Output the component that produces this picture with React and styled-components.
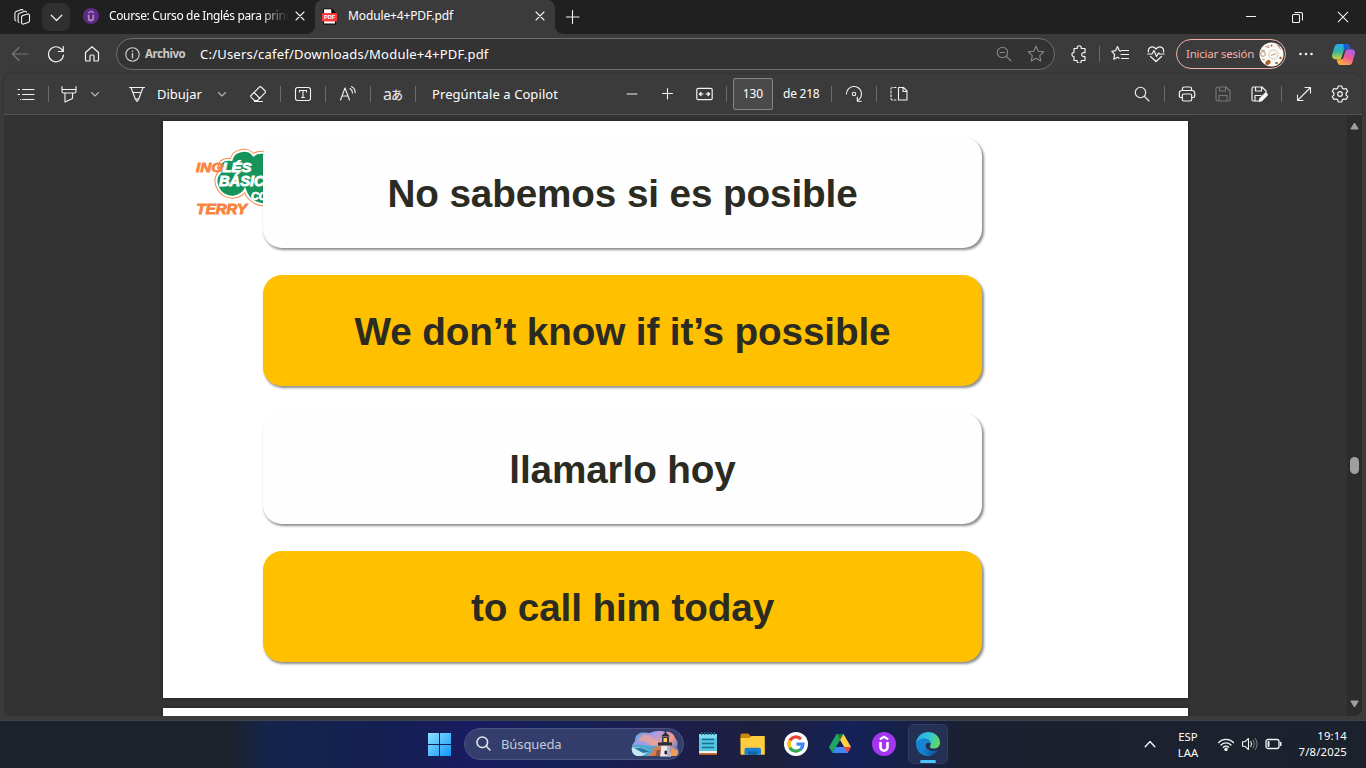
import React from "react";
import styled, { createGlobalStyle, css } from "styled-components";

const GlobalStyle = createGlobalStyle`
  * { box-sizing: border-box; }
  body { margin: 0; background: #3b3b3b; overflow: hidden; }
  svg { display: block; flex: none; }
`;

const ui = css`font-family: "Noto Sans", "Open Sans", "Noto Sans CJK JP", sans-serif;`;

const Screen = styled.div`
  ${ui}
  width: 1366px;
  height: 768px;
  display: flex;
  flex-direction: column;
  color: #fff;
  background: #3b3b3b;
  overflow: hidden;
`;

const Label = styled.span`
  flex: none;
  width: ${(p) => (p.$w ? p.$w + "px" : "auto")};
  margin-left: ${(p) => p.$ml || 0}px;
  font-size: ${(p) => p.$size || 13}px;
  font-weight: ${(p) => p.$weight || 400};
  letter-spacing: ${(p) => p.$ls || 0}px;
  color: ${(p) => p.$color || "#fff"};
  line-height: 18px;
  white-space: nowrap;
`;

const Glyph = styled.svg`
  width: ${(p) => p.$w || 18}px;
  height: ${(p) => p.$h || 18}px;
  margin-left: ${(p) => p.$ml || 0}px;
  color: ${(p) => p.$color || "#f2f2f2"};
  fill: none;
  stroke: currentColor;
  stroke-width: ${(p) => p.$sw || 1.1};
  stroke-linecap: round;
  stroke-linejoin: round;
`;

const Divider = styled.i`
  flex: none;
  width: 1px;
  height: 16px;
  margin-left: ${(p) => p.$ml || 0}px;
  background: #6b6b6b;
`;

/* ---------- tab strip ---------- */

const TabStrip = styled.header`
  height: 34px;
  flex: none;
  display: flex;
  align-items: center;
  background: #202020;
`;

const TabMenuButton = styled.div`
  width: 28px;
  height: 28px;
  margin-left: 11px;
  border-radius: 8px;
  background: #303030;
  display: grid;
  place-items: center;
`;

const InactiveTab = styled.div`
  width: 245px;
  height: 34px;
  padding: 0 0 2px 13px;
  display: flex;
  align-items: center;
`;

const FadedTitle = styled(Label)`
  overflow: hidden;
  mask-image: linear-gradient(90deg, #000 84%, transparent 100%);
`;

const ActiveTab = styled.div`
  position: relative;
  width: 240px;
  height: 34px;
  padding: 0 0 2px 7px;
  display: flex;
  align-items: center;
  background: #3b3b3b;
  border-radius: 8px 8px 0 0;
  &::before, &::after {
    content: "";
    position: absolute;
    bottom: 0;
    width: 8px;
    height: 8px;
  }
  &::before { left: -8px; background: radial-gradient(circle at 0 0, #202020 7.5px, #3b3b3b 8px); }
  &::after { right: -8px; background: radial-gradient(circle at 100% 0, #202020 7.5px, #3b3b3b 8px); }
`;

const WindowButtons = styled.div`
  margin-left: auto;
  display: flex;
  align-items: center;
`;

const WindowButton = styled.div`
  width: 46px;
  display: grid;
  place-items: center;
`;

/* ---------- address row ---------- */

const AddressRow = styled.div`
  height: 40px;
  flex: none;
  display: flex;
  align-items: center;
`;

const AddressBox = styled.div`
  width: 939px;
  height: 32px;
  margin-left: 15px;
  padding-right: 10px;
  display: flex;
  align-items: center;
  border: 1px solid #6e6e6e;
  border-radius: 16px;
  background: #333;
`;

const SignIn = styled.div`
  width: 110px;
  height: 30px;
  margin-left: 11px;
  padding: 0 1px 0 9px;
  display: flex;
  align-items: center;
  justify-content: space-between;
  border: 1px solid #f3b0a8;
  border-radius: 15px;
`;

/* ---------- pdf toolbar ---------- */

const PdfToolbar = styled.div`
  height: 41px;
  flex: none;
  margin: 0 4px;
  display: flex;
  align-items: center;
  border-radius: 8px 8px 0 0;
  border-bottom: 1px solid #535353;
  box-shadow: 0 0 3px rgba(0, 0, 0, 0.35);
`;

const TranslateMark = styled.span`
  flex: none;
  width: 20px;
  margin-left: 12px;
  display: flex;
  align-items: baseline;
  font-size: 16px;
  line-height: 18px;
  color: #e6e6e6;
`;

const Kana = styled.span`
  margin-left: -1px;
  font: 500 12px/18px "Noto Sans CJK JP", sans-serif;
`;

const PageNumber = styled.div`
  width: 40px;
  height: 32px;
  margin-left: 6px;
  border: 1px solid #858585;
  border-radius: 2px;
  background: #4a4a4a;
  display: grid;
  place-items: center;
`;

/* ---------- document ---------- */

const Viewer = styled.main`
  height: 601px;
  flex: none;
  margin: 0 4px;
  display: flex;
  background: #333;
  border-radius: 0 0 8px 8px;
  overflow: hidden;
`;

const Pages = styled.div`
  width: 1025px;
  margin: 6px 0 0 159px;
  display: flex;
  flex-direction: column;
  gap: 10px;
`;

const Page = styled.section`
  height: 577px;
  flex: none;
  padding: 16px 0 0 32px;
  display: flex;
  align-items: flex-start;
  background: #fff;
  box-shadow: 0 0 4px rgba(0, 0, 0, 0.4);
`;

const LogoSlot = styled.div`
  width: 68px;
  margin-top: 9px;
`;

const Cards = styled.div`
  position: relative;
  width: 719px;
  display: flex;
  flex-direction: column;
  gap: 27px;
`;

const Card = styled.div`
  height: 111px;
  padding-top: 2px;
  display: grid;
  place-items: center;
  border-radius: 19px;
  background: ${(p) => (p.$gold ? "#ffc000" : "#fefefe")};
  box-shadow: 1.5px 2px 2.5px rgba(0, 0, 0, 0.45);
  font: bold 38.7px/44px "Liberation Sans", Arial, sans-serif;
  letter-spacing: -0.12px;
  color: #2b2b22;
  white-space: nowrap;
`;

const Scrollbar = styled.div`
  width: 15px;
  margin-left: auto;
  padding: 7px 0 8px;
  display: flex;
  flex-direction: column;
  align-items: center;
  justify-content: space-between;
  background: #2c2c2c;
`;

const Thumb = styled.div`
  width: 9px;
  height: 17px;
  margin-top: 100px;
  border-radius: 5px;
  background: #9f9f9f;
`;

/* ---------- taskbar ---------- */

const Taskbar = styled.footer`
  height: 48px;
  margin-top: 4px;
  flex: none;
  display: flex;
  align-items: center;
  padding: 0 0 2px 427px;
  border-top: 1px solid #3d4350;
  background: linear-gradient(90deg, #1b222c 0, #1b222c 230px, #14244c 268px, #131f52 390px,
    #191c60 470px, #142256 570px, #1b1d50 640px, #1e1f3c 770px, #14225a 850px,
    #152148 900px, #1b2030 970px, #1b222c 1366px);
`;

const SearchBox = styled.div`
  width: 220px;
  height: 32px;
  margin-left: 13px;
  padding-left: 11px;
  display: flex;
  align-items: center;
  border: 1px solid #4b5483;
  border-radius: 16px;
  background: #333e6c;
`;

const ActiveApp = styled.div`
  width: 40px;
  height: 40px;
  margin-left: 12px;
  padding-top: 7px;
  display: flex;
  flex-direction: column;
  align-items: center;
  justify-content: space-between;
  border: 1px solid #303b63;
  border-radius: 5px;
  background: #243054;
`;

const ActiveMark = styled.i`
  width: 16px;
  height: 3px;
  border-radius: 2px;
  background: #4cc2ff;
`;

const Stack = styled.div`
  width: ${(p) => p.$w}px;
  margin-left: ${(p) => p.$ml || 0}px;
  padding-top: ${(p) => p.$pt || 0}px;
  text-align: ${(p) => p.$align || "center"};
  font-size: 11.3px;
  line-height: 16px;
  letter-spacing: ${(p) => p.$ls || 0}px;
  white-space: nowrap;
`;

const Art = styled.svg`
  width: ${(p) => p.$w}px;
  height: ${(p) => p.$h || p.$w}px;
  margin-left: ${(p) => p.$ml || 0}px;
`;

/* ---------- drawings ---------- */

const Chevron = ({ ml, w = 10, up, color, sw }) => (
  <Glyph $w={w} $h={w} $ml={ml} $color={color} $sw={sw} viewBox="0 0 10 10">
    <path d={up ? "M1 7.2 5 3l4 4.2" : "M1.5 3.5 5 7l3.5-3.5"} />
  </Glyph>
);

const Cross = ({ w = 10, ml, sw = 1.1 }) => (
  <Glyph $w={w} $h={w} $ml={ml} $sw={sw} viewBox="0 0 10 10">
    <path d="M1 1l8 8M9 1 1 9" />
  </Glyph>
);

const UdemyIcon = ({ w, ml, bg, fg }) => (
  <Art $w={w} $ml={ml} viewBox="0 0 24 24">
    <circle cx="12" cy="12" r="12" fill={bg} />
    <path d="M7.8 7.4 12 4.8l4.2 2.6" fill="none" stroke={fg} strokeWidth="2" />
    <path d="M8.5 10v5.2a3.5 3.5 0 0 0 7 0V10" fill="none" stroke={fg} strokeWidth="2.6" />
  </Art>
);

const PdfIcon = () => (
  <Art $w={15} $h={17} viewBox="0 0 15 17">
    <path d="M1.5.8h8L13.500 5v11h-12z" fill="#fff" stroke="#000" />
    <path d="M9.3.5 13.8 5H9.3z" fill="#000" />
    <rect y="5" width="15" height="8.4" rx=".8" fill="#f83b3b" />
    <text x="7.5" y="11.300" textAnchor="middle" fontFamily="Liberation Sans, sans-serif" fontWeight="700" fontSize="5.6" fill="#fff">PDF</text>
  </Art>
);

const WorkspacesIcon = () => (
  <Glyph $ml={13} viewBox="0 0 18 18" $sw={1.1}>
    <path d="M9 7.800 14.800 5.900a1.300 1.300 0 0 1 1.700 1.200v5.400a2 2 0 0 1-1.400 1.900l-4.800 1.700a1.300 1.300 0 0 1-1.700-1.200V9.300A1.600 1.600 0 0 1 9.600 7.700" />
    <path d="M6 14.500a1.400 1.400 0 0 1-.9-1.300V7.200a2 2 0 0 1 1.300-1.900l5.500-2a1.300 1.300 0 0 1 1.600.7M2.800 12.700a1.400 1.400 0 0 1-.9-1.300V5.500a2 2 0 0 1 1.300-1.900l5.300-2a1.300 1.300 0 0 1 1.500.6" />
  </Glyph>
);

const CopilotIcon = () => (
  <Art $w={23} $h={21} $ml={18} viewBox="0 0 23 21">
    <defs>
      <linearGradient id="cpA" x1="0" y1="0" x2="0" y2="1">
        <stop offset="0" stopColor="#29a8f5" /><stop offset=".5" stopColor="#31b6a0" /><stop offset="1" stopColor="#d7d132" />
      </linearGradient>
      <linearGradient id="cpB" x1=".6" y1="0" x2=".3" y2="1">
        <stop offset="0" stopColor="#a85cf5" /><stop offset=".5" stopColor="#ef5b8c" /><stop offset="1" stopColor="#ffae4a" />
      </linearGradient>
    </defs>
    <path d="M6 0h8.500c1.800 0 2.500 1.200 3 2.900L18.300 5H14c-1.500 0-2.200 1-2.600 2.500L9.700 13c-.5 1.500-1.300 2.300-2.700 2.300H3.400C.6 15.300-.5 13 .3 10L2.400 3C3 1 4.200 0 6 0z" fill="url(#cpA)" />
    <path d="M11.500 0h3c1.800 0 2.500 1.200 3 2.900L18.300 5H14c-1 0-1.700.5-2.100 1.300z" fill="#1762d6" />
    <path d="M17 21H8.500c-1.800 0-2.500-1.200-3-2.900L4.700 15.500H9c1.500 0 2.200-1 2.600-2.500L13.300 7.500C13.800 6 14.600 5.200 16 5.200h3.600c2.800 0 3.900 2.300 3.100 5.300l-2.100 7C20 20 18.800 21 17 21z" fill="url(#cpB)" />
    <path d="M4.700 15.500H9c1 0 1.700-.5 2.100-1.300L9 21c-2 0-3-1-3.500-2.900z" fill="#f8a83a" />
  </Art>
);

const Avatar = () => (
  <Art $w={25} viewBox="0 0 25 25">
    <defs><clipPath id="avatarClip"><circle cx="12.500" cy="12.500" r="12" /></clipPath></defs>
    <g clipPath="url(#avatarClip)">
      <rect width="25" height="25" fill="#fdfbf8" />
      <g fill="none" stroke="#a97848" strokeWidth=".8">
        <circle cx="14.500" cy="12.500" r="4.600" stroke="#cbb096" /><circle cx="4" cy="12" r="2.400" />
        <path d="M12 13.500l5-2M6 4l3 1.500M9 3l1 3M2 8l4 1M20 4l1.500 3.500M3 17l3 1" />
      </g>
      <g fill="#a5622c">
        <ellipse cx="9" cy="20.500" rx="2.900" ry="2.200" transform="rotate(-45 9 20.500)" />
        <ellipse cx="17.500" cy="21" rx="1.600" ry="1.100" /><circle cx="21.500" cy="16" r="1.200" />
        <circle cx="12.500" cy="3.500" r="1" /><path d="M18 2.500l2.500 1-1 1.500z" />
      </g>
    </g>
  </Art>
);

const cloud = "M73 7.500C66 6 61 7 58.500 9.500C55.500 5 50 4.500 47 5c-6 .8-9.500 4.500-10.500 9C31 13 26 15 25 19c-.5 3 0 5 .5 7-4 4-5 9-3 14 3 8 10 11.500 17 10.500 5-1 9-4 10.500-7C53 53 60 59 73 58.500z";

const LogoArt = () => (
  <Art $w={69} $h={70} viewBox="0 0 69 70">
    <path d={cloud} fill="#17945c" stroke="#fa8a45" strokeWidth="4" />
    <path d={cloud} fill="#17945c" stroke="#fff" strokeWidth="2" />
    <g fontFamily="Liberation Sans, Arial, sans-serif" fontWeight="700" fontStyle="italic" strokeLinejoin="miter">
      <text x="1" y="25.500" fontSize="13.500" textLength="27" lengthAdjust="spacingAndGlyphs" fill="#fa8540" stroke="#fa8540" strokeWidth=".8">ING</text>
      <text x="27.500" y="25.500" fontSize="13.500" textLength="29" lengthAdjust="spacingAndGlyphs" fill="#fff" stroke="#fff" strokeWidth=".9">LÉS</text>
      <text x="24" y="39.500" fontSize="14" textLength="57" lengthAdjust="spacingAndGlyphs" fill="#fff" stroke="#fff" strokeWidth=".9">BÁSICO</text>
      <text x="56" y="54" fontSize="10" textLength="24" lengthAdjust="spacingAndGlyphs" fill="#fff" stroke="#fff" strokeWidth=".7">CON</text>
      <text x="1.500" y="67.500" fontSize="14" textLength="50.500" lengthAdjust="spacingAndGlyphs" fill="#fa8540" stroke="#fff" strokeWidth="4" paintOrder="stroke">TERRY</text>
      <text x="1.500" y="67.500" fontSize="14" textLength="50.500" lengthAdjust="spacingAndGlyphs" fill="#fa8540" stroke="#fa8540" strokeWidth=".9">TERRY</text>
    </g>
  </Art>
);

const LighthouseArt = () => (
  <Art $w={48} $h={26} $ml={69} viewBox="0 0 48 26">
    <defs>
      <linearGradient id="sky" x1="0" y1="0" x2="1" y2=".6">
        <stop offset="0" stopColor="#4fa3e0" /><stop offset=".4" stopColor="#a99be8" /><stop offset=".75" stopColor="#f59a8a" /><stop offset="1" stopColor="#5b7fd0" />
      </linearGradient>
      <clipPath id="skyClip"><path d="M6 4c4-4 9-2 13-2 4-2 10-3 15-1 5-1 9 2 10 6 3 3 3 6 2 9 2 4 2 9-2 9H8c-5 0-8-4-7-9 0-3 2-4 3-6 0-2 0-4 2-6z" /></clipPath>
    </defs>
    <g clipPath="url(#skyClip)">
      <rect width="48" height="26" fill="url(#sky)" />
      <path d="M12 3c8 1 13 5 18 11H20C15 10 10 9 6 11z" fill="#f6a48f" opacity=".7" />
      <path d="M0 15c8-3 18 0 28 0v11H0z" fill="#4fa9d3" />
      <path d="M0 17c6-2 13 0 19 3l-10 6H0z" fill="#c4e6ee" />
      <path d="M3 17c7-1 12 1 16 4l-7 1z" fill="#257ba6" />
      <path d="M21 17l9-2 2 11H14c6-3 10-6 7-9z" fill="#d47c4e" />
      <path d="M26 19h14v7H24z" fill="#925544" /><path d="M40 16l8 4v6h-8z" fill="#ee9c55" />
    </g>
    <path d="M30.500 14.500h8l1.500 11h-11z" fill="#efe8ea" /><path d="M36 14.500h2.500l1.500 11h-4z" fill="#b9b0c4" />
    <path d="M27 11.500h14v3H27zM30 5.500 34.500 1 39 5.500z" fill="#292d3b" /><path d="M31 6h7v6h-7z" fill="#343642" /><path d="M32.500 7H36v4h-3.500z" fill="#ffc766" />
    <path d="M34.500 0v2M34 20h1.500v3H34z" stroke="#292d3b" />
  </Art>
);

const NotepadIcon = () => (
  <Art $w={20} $h={25} $ml={14} viewBox="0 0 20 25">
    <path d="M1 21h18v3H1z" fill="#b45a1d" /><path d="M1 20h18v2.200H1z" fill="#f3efe9" />
    <path d="M1 3h18v17H1z" fill="#55c3df" /><path d="M1 3h18v4H1z" fill="#7bdcf0" />
    <path d="M3.500 1v3M6.800 1v3M10 1v3M13.200 1v3M16.500 1v3" stroke="#1b6783" strokeWidth="1.300" />
    <path d="M4 8.500h12M4 12.500h12M4 16.500h12" stroke="#12728f" strokeWidth="1.700" />
  </Art>
);

const FolderIcon = () => (
  <Art $w={25} $h={24} $ml={22} viewBox="0 0 25 24">
    <path d="M.5 3a1.500 1.500 0 0 1 1.500-1.500h6.500L11 4.500V9H.5z" fill="#c98a08" />
    <path d="M.5 6h9l2-2H24a.8.8 0 0 1 .8.800V22a.8.8 0 0 1-.8.800H1.300a.8.8 0 0 1-.8-.8z" fill="#ffcd3d" />
    <path d="M4.500 22.800v-5a2 2 0 0 1 2-2H19a2 2 0 0 1 2 2v5z" fill="#1b7fd0" /><path d="M8 19.500h9.500v3.300H8z" fill="#1264a9" />
  </Art>
);

const GoogleIcon = () => (
  <Art $w={24} $ml={19} viewBox="0 0 24 24">
    <circle cx="12" cy="12" r="12" fill="#fff" />
    <g fill="none" strokeWidth="3.200">
      <path d="M5.800 8.600A7 7 0 0 1 17 7.100" stroke="#ea4335" />
      <path d="M5.800 8.600a7 7 0 0 0 0 6.800" stroke="#fbbc05" />
      <path d="M5.800 15.400a7 7 0 0 0 10.700 2" stroke="#34a853" />
      <path d="M16.500 17.400A7 7 0 0 0 19 12.200h-6.500" stroke="#4285f4" />
    </g>
  </Art>
);

const DriveIcon = () => (
  <Art $w={24} $ml={20} viewBox="0 0 24 24">
    <path d="M8.500 2h7L12 8.500 4.500 21 1 15z" fill="#1fa463" />
    <path d="M8.500 2h7L23 15h-7z" fill="#ffcf44" />
    <path d="M8.500 2h7L12 8.200z" fill="#188038" />
    <path d="M8 15h15l-3.500 6h-15z" fill="#4285f4" />
    <path d="M16 15h7l-3.500 6z" fill="#ea4335" />
    <path d="M12 8.500 8.200 15H16z" fill="#172052" />
  </Art>
);

const EdgeIcon = () => (
  <Art $w={24} viewBox="0 0 24 24">
    <defs>
      <linearGradient id="eTop" x1="0" y1=".3" x2="1" y2=".6"><stop offset="0" stopColor="#25a8e8" /><stop offset=".5" stopColor="#32c5d6" /><stop offset="1" stopColor="#63dc56" /></linearGradient>
      <linearGradient id="eLow" x1="0" y1="0" x2="1" y2="1"><stop offset="0" stopColor="#1b93dd" /><stop offset="1" stopColor="#0c4d9c" /></linearGradient>
    </defs>
    <path d="M0 12C0 5 5.500 0 12 0c7 0 12 5 12 10.500 0 4-3 6-6.300 6-2.500 0-4-1-4-1.800s1-1.200 1-3C14.700 9.500 12 7.500 9 7.500 4.500 7.500 1 10 0 12z" fill="url(#eTop)" />
    <path d="M0 12c0-3 4-5.500 8.500-5.500 4 0 6.200 2.500 6.200 5.200-2-2-5.700-.7-5.700 3.300 0 4 4 7.300 8 7.300C15.500 23.500 13.500 24 12 24 5 24 0 18.500 0 12z" fill="#1483d2" />
    <path d="M9.500 9.500C6 11.500 5.500 17 8.500 20.500c2 2.500 5.500 3.500 8 2 2.500-1 4.500-3 5.500-4.500-2 1-5.500 1.500-8 .5s-4.500-3-4.500-5c0-1.500.8-2.800 2-3.500-.7-.5-1.500-.6-2-.5z" fill="url(#eLow)" />
  </Art>
);

/* ---------- page ---------- */

const phrases = [
  { text: "No sabemos si es posible" },
  { text: "We don’t know if it’s possible", gold: true },
  { text: "llamarlo hoy" },
  { text: "to call him today", gold: true },
];

const floppy = "M3.500 2H12l4 4v8.500a1.500 1.500 0 0 1-1.500 1.500h-11A1.500 1.500 0 0 1 2 14.500v-11A1.500 1.500 0 0 1 3.500 2zM5.500 2v4h6V2M5 16v-5.500h8V16";

export default function App() {
  return (
    <Screen>
      <GlobalStyle />
      <TabStrip>
        <WorkspacesIcon />
        <TabMenuButton><Chevron w={15} sw={0.8} /></TabMenuButton>
        <InactiveTab>
          <UdemyIcon w={16} bg="#5d2b86" fg="#a98cc0" />
          <FadedTitle $ml={10} $size={12} $w={180} $ls={-0.36}>Course: Curso de Inglés para principiantes</FadedTitle>
          <Cross ml={6} />
        </InactiveTab>
        <ActiveTab>
          <PdfIcon />
          <Label $ml={11} $size={12} $w={187} $ls={-0.13}>Module+4+PDF.pdf</Label>
          <Cross />
        </ActiveTab>
        <Glyph $ml={11} $w={14} $h={14} viewBox="0 0 14 14"><path d="M6.500 .5v13M0 7h13" /></Glyph>
        <WindowButtons>
          <WindowButton><Glyph $w={10} $h={10} viewBox="0 0 10 10"><path d="M0 4.500h10" /></Glyph></WindowButton>
          <WindowButton><Glyph $w={11} $h={11} viewBox="0 0 11 11"><path d="M.5 3.500a1 1 0 0 1 1-1h5a1 1 0 0 1 1 1v6a1 1 0 0 1-1 1h-5a1 1 0 0 1-1-1zM3 .5h5.500a2 2 0 0 1 2 2v5.500" /></Glyph></WindowButton>
          <WindowButton><Cross w={12} sw={0.9} /></WindowButton>
        </WindowButtons>
      </TabStrip>

      <AddressRow>
        <Glyph $ml={11} $color="#777" viewBox="0 0 18 18"><path d="M17 9H1.500M8 2.500 1.500 9 8 15.500" /></Glyph>
        <Glyph $ml={18} $sw={1.200} viewBox="0 0 18 18"><path d="M16 6.500A7.500 7.500 0 1 0 16.500 10M16.300 1.500v5h-5" /></Glyph>
        <Glyph $ml={18} $sw={1.200} viewBox="0 0 18 18"><path d="M2.500 7.500 9 1.800l6.500 5.700V15a1 1 0 0 1-1 1H11v-5a1 1 0 0 0-1-1H8a1 1 0 0 0-1 1v5H3.500a1 1 0 0 1-1-1z" /></Glyph>
        <AddressBox>
          <Glyph $ml={8} $w={15} $h={15} $color="#d0d0d0" viewBox="0 0 15 15"><circle cx="7.500" cy="7.500" r="6.700" /><path d="M7.500 6.800v4M7.500 4.300v.2" strokeWidth="1.400" /></Glyph>
          <Label $ml={5} $size={11.5} $weight={700} $w={50} $ls={-0.45} $color="#c8c8c8">Archivo</Label>
          <Label $ml={5} $w={796} $ls={0.22}>C:/Users/cafef/Downloads/Module+4+PDF.pdf</Label>
          <Glyph $w={16} $h={16} $color="#888" viewBox="0 0 16 16"><circle cx="6.500" cy="6.500" r="5.200" /><path d="M10.500 10.500 15 15M4.200 6.500h4.600" /></Glyph>
          <Glyph $ml={15} $color="#888" viewBox="0 0 18 18"><path d="M9 1.300l2.300 5 5.400.6-4 3.700 1.100 5.400L9 13.300 4.200 16l1.100-5.400-4-3.700 5.400-.6z" /></Glyph>
        </AddressBox>
        <Glyph $ml={15} $sw={1.200} viewBox="0 0 18 18"><path d="M4 3.500h3.200a2.100 2.100 0 1 1 4 0H15v4a1 1 0 0 1-.5.300 2 2 0 1 0 0 3.600l.5.300V15.500h-3.800a2.100 2.100 0 1 1-4 0H4V11.700a2.100 2.100 0 1 1 0-4.200z" /></Glyph>
        <Divider $ml={11} />
        <Glyph $ml={11} $sw={1.200} viewBox="0 0 18 18"><path d="M9.500 6.300 8.300 5.600 6.500 1.500 4.600 5.700.8 6.300l2.800 3-.8 5 3.700-2 1.500.8M10.500 5.500h7M10 9.500h7.500M10.500 13.500h7" /></Glyph>
        <Glyph $ml={18} $sw={1.200} viewBox="0 0 18 18"><path d="M1.500 7C.5 3 4.500.5 7.700 2.800L9 4l1.300-1.200C13.500.5 17.500 3 16.500 7M.8 9H5l2-3.500 2.500 6L11.500 8l1 1h4.700M3.500 11.500 9 16.500l5.500-5" /></Glyph>
        <SignIn>
          <Label $size={11.5} $ls={-0.22} $color="#f5b0a8">Iniciar sesión</Label>
          <Avatar />
        </SignIn>
        <Glyph $ml={12} $w={16} $h={4} viewBox="0 0 16 4"><g fill="currentColor" stroke="none"><circle cx="2.500" cy="2" r="1.300" /><circle cx="8" cy="2" r="1.300" /><circle cx="13.500" cy="2" r="1.300" /></g></Glyph>
        <CopilotIcon />
      </AddressRow>

      <PdfToolbar>
        <Glyph $ml={13} viewBox="0 0 18 18"><path d="M5.500 4.500h11.500M5.500 9.500h11.500M5.500 14.500h11.500M1 4.500h1.500M1 9.500h1.500M3.500 14.500h.2" /></Glyph>
        <Divider $ml={13} />
        <Glyph $ml={11} viewBox="0 0 18 18" $sw={1.100}><path d="M2 1.500v5a1.500 1.500 0 0 0 1.500 1.500h11A1.500 1.500 0 0 0 16 6.500v-5M2.500 4.500h13M5 8v9l7.500-3.500V8" /></Glyph>
        <Chevron ml={12} color="#b5b5b5" />
        <Glyph $ml={28} viewBox="0 0 18 18" $sw={1.100}><path d="M1.500 2.500h15M3 2.500l4.500 12L9 16.500l1.500-2 4.500-12M5 7.500h8M7.500 14h3" /></Glyph>
        <Label $ml={11} $w={45}>Dibujar</Label>
        <Chevron ml={15} color="#b5b5b5" />
        <Glyph $ml={22} viewBox="0 0 18 18" $sw={1.100}><path d="M2 10.500 10.500 2a1.200 1.200 0 0 1 1.700 0l4 4a1.200 1.200 0 0 1 0 1.700L8.500 15.500H5.500L2 12.200a1.200 1.200 0 0 1 0-1.700zM5 7.500l6 6M5.500 16.500h8" /></Glyph>
        <Divider $ml={13} />
        <Glyph $ml={13} viewBox="0 0 18 18" $sw={1.100}><rect x="1.500" y="2.500" width="15" height="13" rx="2.200" /><path d="M5.500 7V5.500h7V7M9 5.500v7M7.500 12.500h3" /></Glyph>
        <Divider $ml={13} />
        <Glyph $ml={13} viewBox="0 0 18 18"><path d="M1.500 15 6 3l4.500 12M3 11h6M11 3.500q2.500 1.500 2.500 4.500M12.500 1.500q3.700 2 3.700 6.200" /></Glyph>
        <Divider $ml={13} />
        <TranslateMark>a<Kana>あ</Kana></TranslateMark>
        <Divider $ml={12} />
        <Label $ml={16} $w={126} $ls={0.08}>Pregúntale a Copilot</Label>
        <Glyph $ml={66} $w={16} $h={16} viewBox="0 0 16 16"><path d="M3 8h10" /></Glyph>
        <Glyph $ml={20} $w={16} $h={16} viewBox="0 0 16 16"><path d="M7.500 2.500v10.500M2.500 7.500h10" /></Glyph>
        <Glyph $ml={20} $w={17} $h={14} viewBox="0 0 17 14" $sw={1.200}><rect x=".8" y="1.300" width="15.400" height="11.400" rx="1.500" /><path d="M3.500 7h3.500M10 7h3.500M5 5.300 3.300 7 5 8.700zM12 5.300 13.700 7 12 8.700z" /></Glyph>
        <Divider $ml={13} />
        <PageNumber><Label $size={12} $ls={-0.1}>130</Label></PageNumber>
        <Label $ml={10} $w={36} $size={12} $ls={-0.25}>de 218</Label>
        <Divider $ml={12} />
        <Glyph $ml={13} viewBox="0 0 18 18" $sw={1.100}><path d="M1.500 9A7.500 7.500 0 1 1 12.500 15.600M12.300 12v4.200h4" /><circle cx="9" cy="9" r="1.700" /></Glyph>
        <Divider $ml={13} />
        <Glyph $ml={13} viewBox="0 0 18 18" $sw={1.100}><path d="M8.500 2.500h5l3.500 3.500v9H8.500zM13 2.500V6.500h4" /><path d="M6 2.500H2.500A1.500 1.500 0 0 0 1 4v9.500A1.500 1.500 0 0 0 2.500 15H6" strokeDasharray="2 1.800" /></Glyph>
        <Glyph $ml={226} $w={16} $h={16} viewBox="0 0 16 16"><circle cx="6.500" cy="6.500" r="5.200" /><path d="M10.500 10.500 15 15" /></Glyph>
        <Divider $ml={14} />
        <Glyph $ml={13} viewBox="0 0 18 18" $sw={1.200}><path d="M4 12.500H2.800a1.500 1.500 0 0 1-1.500-1.500V8a2.500 2.500 0 0 1 2.500-2.500h10.400A2.500 2.500 0 0 1 16.700 8v3a1.500 1.500 0 0 1-1.500 1.500H14M4.500 5.500v-2A1.500 1.500 0 0 1 6 2h6a1.500 1.500 0 0 1 1.500 1.500v2" /><rect x="4.300" y="9" width="9.400" height="7" rx="1.500" /></Glyph>
        <Glyph $ml={18} $color="#777" viewBox="0 0 18 18"><path d={floppy} /></Glyph>
        <Glyph $ml={18} viewBox="0 0 18 18" $sw={1.200}><path d="M8 16H3.500A1.500 1.500 0 0 1 2 14.500v-11A1.500 1.500 0 0 1 3.500 2H12l4 4v2M5.500 2v4h6V2M5 16v-5.500h6" /><path d="m9 16.500.8-2.800 5-5a1.300 1.300 0 0 1 2 2l-5 5z" fill="#fff" /></Glyph>
        <Divider $ml={13} />
        <Glyph $ml={14} $w={16} $h={16} viewBox="0 0 16 16"><path d="M1.500 14.500l13-13M9 1.500h5.500V7M1.500 9v5.500H7" /></Glyph>
        <Glyph $ml={19} viewBox="0 0 18 18" $sw={1.200}><circle cx="9" cy="9" r="2.300" /><path d="M7.300 1h3.400l.6 2.200 1.500.9 2.200-.6 1.700 2.900L15.100 8v2l1.600 1.600-1.700 2.900-2.200-.6-1.500.9-.6 2.200H7.300l-.6-2.200-1.500-.9-2.200.6-1.700-2.900L2.900 10V8L1.300 6.400 3 3.500l2.200.6 1.500-.9z" /></Glyph>
      </PdfToolbar>

      <Viewer>
        <Pages>
          <Page>
            <LogoSlot><LogoArt /></LogoSlot>
            <Cards>
              {phrases.map((p) => (
                <Card key={p.text} $gold={p.gold}>{p.text}</Card>
              ))}
            </Cards>
          </Page>
          <Page />
        </Pages>
        <Scrollbar>
          <Art $w={9} $h={8} viewBox="0 0 9 8"><path d="M4.500 1 8.200 7H.8z" fill="#9f9f9f" stroke="#9f9f9f" strokeLinejoin="round" /></Art>
          <Thumb />
          <Art $w={9} $h={8} viewBox="0 0 9 8"><path d="M4.500 7 8.200 1H.8z" fill="#9f9f9f" stroke="#9f9f9f" strokeLinejoin="round" /></Art>
        </Scrollbar>
      </Viewer>

      <Taskbar>
        <Art $w={24} viewBox="0 0 24 24">
          <defs><linearGradient id="win" x1="0" y1="0" x2="1" y2="1"><stop offset="0" stopColor="#8ee2ff" /><stop offset="1" stopColor="#1195f5" /></linearGradient></defs>
          <path d="M1 1h11v11H1zM13 1h11v11H13zM1 13h11v11H1zM13 13h11v11H13z" fill="url(#win)" />
        </Art>
        <SearchBox>
          <Glyph $w={15} $h={15} $sw={1.600} $color="#e4e6ee" viewBox="0 0 15 15"><circle cx="6.300" cy="6.300" r="5.300" /><path d="M10.300 10.300 14 14" /></Glyph>
          <Label $ml={10} $w={61} $ls={-0.1} $color="#c5cadb">Búsqueda</Label>
          <LighthouseArt />
        </SearchBox>
        <NotepadIcon />
        <FolderIcon />
        <GoogleIcon />
        <DriveIcon />
        <UdemyIcon w={24} ml={20} bg="#a435f0" fg="#fff" />
        <ActiveApp><EdgeIcon /><ActiveMark /></ActiveApp>
        <Chevron ml={196} w={12} up sw={1.200} />
        <Stack $ml={16} $w={32} $pt={2}>ESP<br />LAA</Stack>
        <Glyph $ml={13} $w={18} $h={14} $sw={1.300} viewBox="0 0 18 14"><path d="M1.500 5.500a10.500 10.500 0 0 1 15 0M4 8a7 7 0 0 1 10 0M6.300 10.300a3.800 3.800 0 0 1 5.400 0" /><circle cx="9" cy="12.300" r="1.100" fill="currentColor" /></Glyph>
        <Glyph $ml={6} $w={18} $h={14} viewBox="0 0 18 14"><path d="M1.500 4.700H4L7.500 1.500v11L4 9.300H1.500zM9.800 4.700q1.500 2.300 0 4.600" /><path d="M12 3q2.600 4 0 8M14.300 1.500q3.500 5.500 0 11" stroke="#737780" /></Glyph>
        <Glyph $ml={6} $w={17} $h={12} $sw={1.300} viewBox="0 0 17 12"><rect x="1" y="1.500" width="13" height="9" rx="2" /><path d="M3.500 4v4" strokeWidth="2" /><path d="M15.700 4.500v3" strokeWidth="1.600" /></Glyph>
        <Stack $ml={3} $w={62} $align="right" $ls={0.15}>19:14<br />7/8/2025</Stack>
      </Taskbar>
    </Screen>
  );
}
